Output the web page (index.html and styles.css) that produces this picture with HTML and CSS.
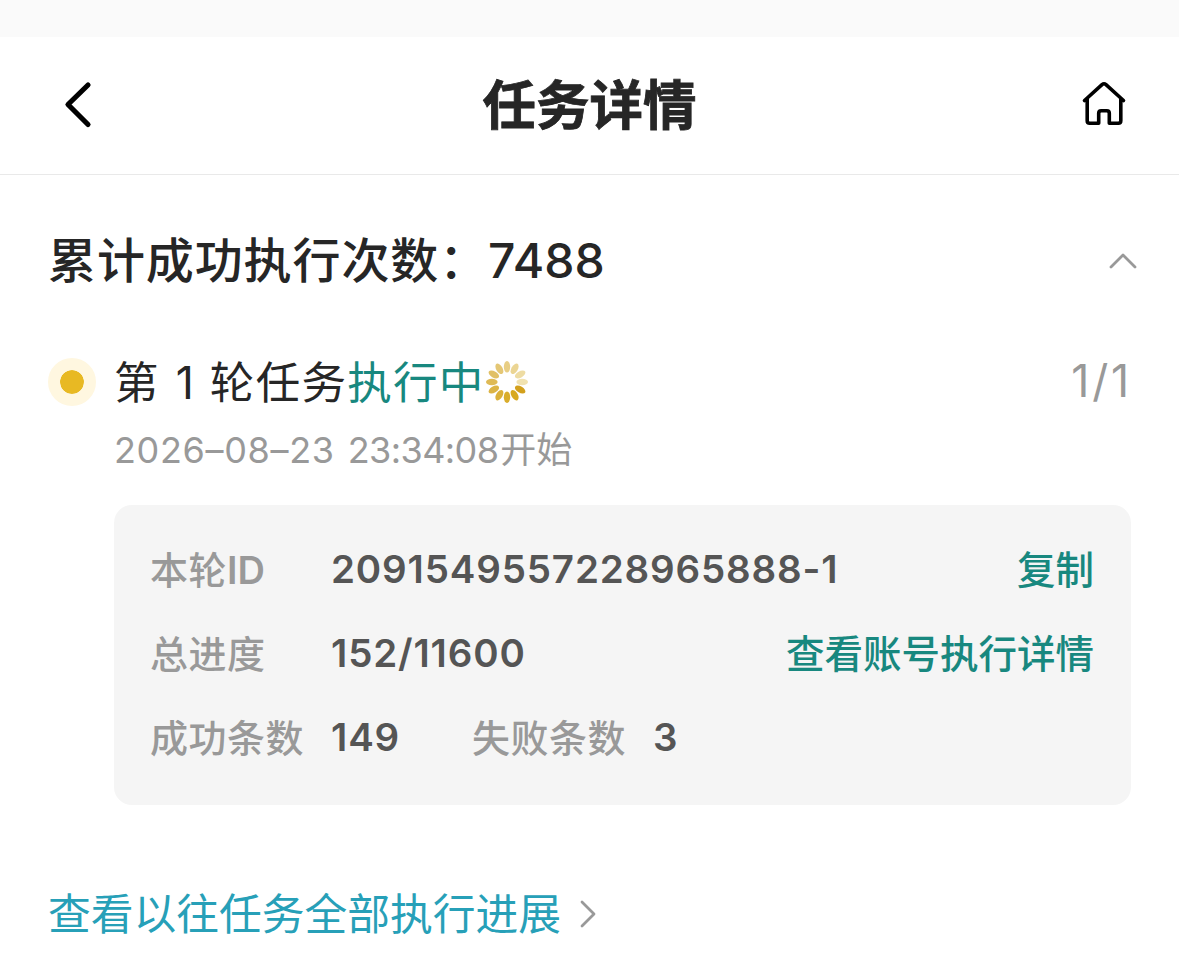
FILE: index.html
```html
<!DOCTYPE html>
<html lang="zh-CN">
<head>
<meta charset="utf-8">
<title>任务详情</title>
<link rel="stylesheet" href="styles.css">
</head>
<body>
<div class="strip"></div>
<header class="nav">
  <svg class="back" width="30" height="50" viewBox="0 0 30 50"><path d="M26 5 L6 24.500 L26 44.500"/></svg>
  <h1 class="title">任务详情</h1>
  <svg class="home" width="46" height="46" viewBox="0 0 46 46"><path d="M3.500 20.500 L21 4.600 Q23 2.900 25 4.600 L42.500 20.500 M6.200 18.500 V40.700 Q6.200 43.200 8.700 43.200 H17.700 V33.200 Q17.700 30.700 20.200 30.700 H25.800 Q28.300 30.700 28.300 33.200 V43.200 H37.300 Q39.800 43.200 39.800 40.700 V18.500"/></svg>
</header>
<main class="content">
  <section class="summary">
    <h2 class="total">累计成功执行次数：<span class="total-num">7488</span></h2>
    <svg class="chev-up" width="30" height="18" viewBox="0 0 30 18"><path d="M3 15 L15 3 L27 15"/></svg>
  </section>
  <section class="round">
    <span class="dot"></span>
    <div class="round-body">
      <div class="round-head">
        <span class="round-name">第 <span class="round-no">1</span> 轮任务<span class="running">执行中</span></span>
        <svg class="spinner" width="42" height="42" viewBox="-21 -21 42 42">
          <ellipse cx="15.200" rx="5.800" ry="3.200" fill="#f1e2b0"/>
          <ellipse cx="15.200" rx="5.800" ry="3.200" fill="#d3a01c" transform="rotate(30)"/>
          <ellipse cx="15.200" rx="5.800" ry="3.200" fill="#d8a91f" transform="rotate(60)"/>
          <ellipse cx="15.200" rx="5.800" ry="3.200" fill="#d9ad2c" transform="rotate(90)"/>
          <ellipse cx="15.200" rx="5.800" ry="3.200" fill="#dbb13a" transform="rotate(120)"/>
          <ellipse cx="15.200" rx="5.800" ry="3.200" fill="#dcb445" transform="rotate(150)"/>
          <ellipse cx="15.200" rx="5.800" ry="3.200" fill="#dfba55" transform="rotate(180)"/>
          <ellipse cx="15.200" rx="5.800" ry="3.200" fill="#e1c066" transform="rotate(210)"/>
          <ellipse cx="15.200" rx="5.800" ry="3.200" fill="#e4c775" transform="rotate(240)"/>
          <ellipse cx="15.200" rx="5.800" ry="3.200" fill="#e8ce84" transform="rotate(270)"/>
          <ellipse cx="15.200" rx="5.800" ry="3.200" fill="#ebd593" transform="rotate(300)"/>
          <ellipse cx="15.200" rx="5.800" ry="3.200" fill="#eedca3" transform="rotate(330)"/>
        </svg>
        <span class="count">1/1</span>
      </div>
      <div class="time"><span class="date">2026–08–23</span> <span class="clock">23:34:08</span>开始</div>
      <div class="card">
        <div class="row">
          <span class="label">本轮<span class="latin">ID</span></span><span class="value">2091549557228965888-1</span><a class="action">复制</a>
        </div>
        <div class="row">
          <span class="label">总进度</span><span class="value">152/11600</span><a class="action">查看账号执行详情</a>
        </div>
        <div class="row">
          <span class="label">成功条数</span><span class="value ok">149</span><span class="label fail-label">失败条数</span><span class="value">3</span>
        </div>
      </div>
    </div>
  </section>
  <a class="history">查看以往任务全部执行进展<svg class="chev-right" width="18" height="30" viewBox="0 0 18 30"><path d="M3 3 L15 15 L3 27"/></svg></a>
</main>
</body>
</html>
```
FILE: styles.css
```css
* { box-sizing: border-box; }
body {
  margin: 0;
  height: 977px;
  overflow: hidden;
  background: #fff;
  color: #262626;
  font-family: Inter, "Noto Sans CJK SC", sans-serif;
  white-space: nowrap;
}
svg { display: block; flex: none; fill: none; stroke-linecap: round; stroke-linejoin: round; }
.strip { height: 37px; background: #fafafa; }
.nav {
  display: grid;
  grid-template-columns: 1fr auto 1fr;
  align-items: center;
  height: 138px;
  padding: 0 52px 2px 62px;
  border-bottom: 1px solid #e9e9e9;
}
.back { stroke: #000; stroke-width: 5.200; }
.home { stroke: #000; stroke-width: 3.600; justify-self: end; margin-bottom: 3px; }
.title {
  margin: 3px 10px 0 0;
  font-size: 53.500px;
  font-weight: 700;
  line-height: 70px;
  -webkit-text-stroke: 0.800px #262626;
}
.content { padding: 0 48px 0 48px; }
.summary { display: flex; justify-content: space-between; align-items: center; height: 171px; }
.total { margin: 1px 0 0; font-size: 48px; font-weight: 500; line-height: 70px; letter-spacing: 0.900px; }
.total-num { letter-spacing: 0; }
.chev-up { stroke: #999; stroke-width: 2.800; margin-right: -7px; }
.round { display: flex; align-items: flex-start; gap: 19px; margin-top: 7px; }
.dot {
  flex: none;
  width: 48px;
  height: 48px;
  margin-top: 5px;
  border-radius: 50%;
  border: 12px solid #fff7e0;
  background: #e8b923;
  background-clip: padding-box;
}
.round-body { flex: 1; margin-left: -1px; }
.round-head { display: flex; align-items: center; height: 58px; font-size: 44.500px; }
.round-name { margin-top: -5px; letter-spacing: 1.300px; }
.round-no { margin: 0 1px 0 2px; }
.running { color: #18887f; }
.spinner { margin-left: 1px; }
.count { margin: -3px -1px 0 auto; color: #999; letter-spacing: 2.800px; }
.time { height: 48px; line-height: 48px; margin-top: 15px; color: #999; font-size: 36px; }
.date { margin-right: 3px; letter-spacing: 0.650px; }
.clock { margin-right: 2px; letter-spacing: -0.600px; }
.card {
  display: flex;
  flex-direction: column;
  gap: 36px;
  width: 1017px;
  height: 300px;
  margin-top: 31px;
  padding: 41px 37px 0 36px;
  border-radius: 18px;
  background: #f5f5f5;
}
.row { display: flex; height: 48px; line-height: 48px; font-size: 38px; }
.label { width: 181px; color: #999; font-weight: 500; letter-spacing: 0.500px; }
.latin { font-weight: 600; letter-spacing: 0; }
.value { margin-top: -1px; color: #555; font-weight: 600; font-size: 38.500px; letter-spacing: 0.850px; }
.ok { width: 141px; }
.action { margin-left: auto; color: #18887f; font-weight: 500; font-size: 38.500px; }
.history { display: flex; align-items: center; margin-top: 85px; height: 50px; line-height: 50px; font-size: 42.750px; color: #27a0b8; }
.chev-right { stroke: #999; stroke-width: 2.800; margin-left: 18px; margin-top: -2px; }
```
